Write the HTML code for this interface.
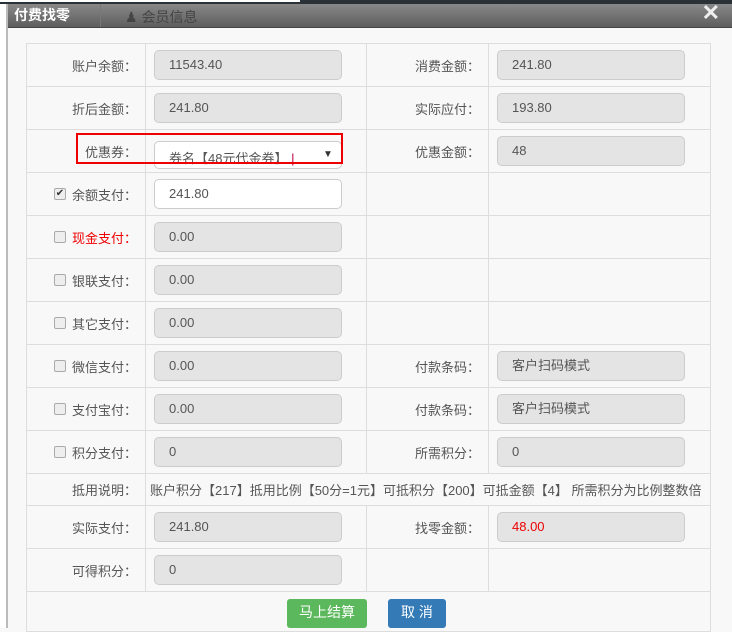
<!DOCTYPE html>
<html><head><meta charset="utf-8"><style>
body{margin:0;width:732px;height:628px;overflow:hidden;background:#f8f8f8;font-family:"Liberation Sans","Noto Sans CJK SC",sans-serif;font-size:13px;color:#555;position:relative}
.strip{position:absolute;left:0;top:0;width:6px;height:628px;background:#fff;border-right:2px solid #bbb}
.topbar{position:absolute;left:0;top:0;width:732px;height:4px;background:#2a3238}
.topbar i{position:absolute;left:0;top:0;width:300px;height:2px;background:#fff}
.hdr{position:absolute;left:8px;top:4px;width:724px;height:23px;background:linear-gradient(#888,#5e5e5e);border-bottom:1px solid #444}
.hdr .t1{position:absolute;left:6px;top:1px;color:#fff;font-size:14px;font-weight:bold}
.hdr .sep{position:absolute;left:92px;top:0;width:1px;height:23px;background:#777}
.hdr .t2{position:absolute;left:117px;top:3px;color:#444;font-size:14px}
.hdr .x{position:absolute;right:12px;top:-4px;color:#eee;font-size:22px;font-weight:bold}
table{position:absolute;left:26px;top:43px;border-collapse:collapse;width:684px;table-layout:fixed}
td{border:1px solid #ddd;height:43px;padding:0;position:relative;box-sizing:border-box}
td.l,td.l2{text-align:right;padding-right:8px}
.in{display:inline-block;width:172px;height:28px;line-height:28px;border:1px solid #ccc;border-radius:5px;background:#e4e4e4;padding-left:14px;box-sizing:content-box;margin-left:8px;color:#555;vertical-align:middle}
.wh{background:#fff}
.cb{position:absolute;left:27px;top:15px;width:10px;height:10px;border:1px solid #aaa;border-radius:2px;background:#eee;font-size:10px;line-height:10px;text-align:center;color:#333}
.red{color:#e00}
.btn{position:absolute;top:599px;height:29px;line-height:27px;color:#fff;font-size:14px;text-align:center;border-radius:3px}
</style></head><body>
<div class="strip"></div>
<div class="topbar"><i></i></div>
<div class="hdr"><span class="t1">付费找零</span><span class="sep"></span><span class="t2">&#9823; 会员信息</span><span class="x">✕</span></div>
<table>
<colgroup><col style="width:119px"><col style="width:221px"><col style="width:122px"><col style="width:222px"></colgroup>
<tr><td class="l">账户余额：</td><td><span class="in">11543.40</span></td><td class="l2">消费金额：</td><td><span class="in">241.80</span></td></tr>
<tr><td class="l">折后金额：</td><td><span class="in">241.80</span></td><td class="l2">实际应付：</td><td><span class="in">193.80</span></td></tr>
<tr><td class="l">优惠券：</td><td><span class="in wh" style="height:26px;margin-top:8px;line-height:34px;vertical-align:top;position:relative">券名【48元代金券】 <span style="color:#b04">|</span><span style="position:absolute;left:168px;top:0;line-height:26px;font-size:10px;color:#333">▼</span></span></td><td class="l2">优惠金额：</td><td><span class="in">48</span></td></tr>
<tr><td class="l"><span class="cb">✔</span>余额支付：</td><td><span class="in wh">241.80</span></td><td></td><td></td></tr>
<tr><td class="l"><span class="cb"></span><span class="red">现金支付：</span></td><td><span class="in">0.00</span></td><td></td><td></td></tr>
<tr><td class="l"><span class="cb"></span>银联支付：</td><td><span class="in">0.00</span></td><td></td><td></td></tr>
<tr><td class="l"><span class="cb"></span>其它支付：</td><td><span class="in">0.00</span></td><td></td><td></td></tr>
<tr><td class="l"><span class="cb"></span>微信支付：</td><td><span class="in">0.00</span></td><td class="l2">付款条码：</td><td><span class="in">客户扫码模式</span></td></tr>
<tr><td class="l"><span class="cb"></span>支付宝付：</td><td><span class="in">0.00</span></td><td class="l2">付款条码：</td><td><span class="in">客户扫码模式</span></td></tr>
<tr><td class="l"><span class="cb"></span>积分支付：</td><td><span class="in">0</span></td><td class="l2">所需积分：</td><td><span class="in">0</span></td></tr>
<tr><td class="l" style="height:32px">抵用说明：</td><td colspan="3" style="height:32px;padding-left:4px;white-space:nowrap;overflow:hidden">账户积分【217】抵用比例【50分=1元】可抵积分【200】可抵金额【4】 所需积分为比例整数倍</td></tr>
<tr><td class="l">实际支付：</td><td><span class="in">241.80</span></td><td class="l2">找零金额：</td><td><span class="in red">48.00</span></td></tr>
<tr><td class="l">可得积分：</td><td><span class="in">0</span></td><td></td><td></td></tr>
<tr><td colspan="4" style="height:40px"></td></tr>
</table>
<div style="position:absolute;left:76px;top:133px;width:263px;height:27px;border:2px solid #e00"></div>
<div class="btn" style="left:287px;width:80px;background:#5cb85c">马上结算</div>
<div class="btn" style="left:388px;width:58px;background:#337ab7">取 消</div>
</body></html>
